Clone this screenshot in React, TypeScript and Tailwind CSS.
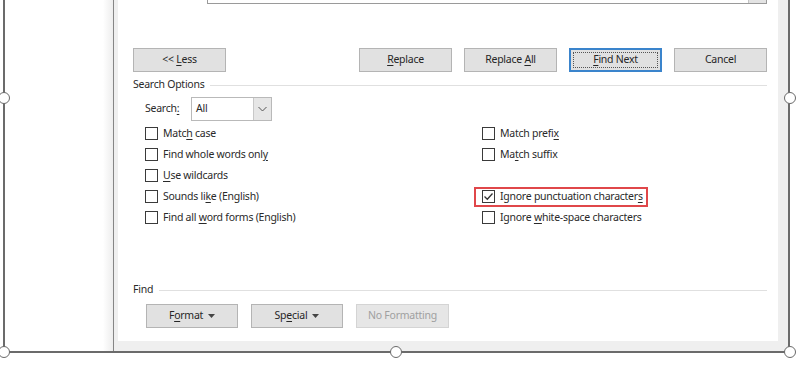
import { ReactNode } from "react";
import clsx from "clsx";

function U({ children }: { children: ReactNode }) {
  return <span className="underline underline-offset-2 decoration-1">{children}</span>;
}

function Caret() {
  return (
    <svg width="7" height="4" viewBox="0 0 7 4" className="ml-[5px]">
      <path d="M0 0h7L3.5 4z" fill="#444" />
    </svg>
  );
}

function Btn({
  children,
  w = "w-[93px]",
  focused,
  disabled,
  caret,
}: {
  children: ReactNode;
  w?: string;
  focused?: boolean;
  disabled?: boolean;
  caret?: boolean;
}) {
  return (
    <div
      className={clsx(
        "relative h-[24px] flex items-center justify-center",
        w,
        focused ? "border-2 border-[#3a84cc]" : "border",
        disabled
          ? "bg-[#e6e6e6] text-[#a0a0a0] border-[#d4d4d4]"
          : "bg-[#e1e1e1] text-[#262626]",
        !focused && !disabled && "border-[#b4b4b4]"
      )}
    >
      {focused && <span className="absolute inset-[2px] border border-dotted border-[#555]" />}
      <span>{children}</span>
      {caret && <Caret />}
    </div>
  );
}

function Check({ label, checked }: { label?: ReactNode; checked?: boolean }) {
  return (
    <div className="h-[21px] flex items-center gap-[5px]">
      {label !== undefined && (
        <>
          <span className="w-[13px] h-[13px] border border-[#3a3a3a] bg-white flex items-center justify-center">
            {checked && (
              <svg width="11" height="11" viewBox="0 0 11 11">
                <path d="M1.5 5.5l2.8 2.8L9.5 2.5" stroke="#333" strokeWidth="1.3" fill="none" />
              </svg>
            )}
          </span>
          <span>{label}</span>
        </>
      )}
    </div>
  );
}

function Handle({ pos }: { pos: string }) {
  return (
    <span
      className={clsx(
        "absolute w-[12px] h-[12px] rounded-full bg-white border-[1.5px] border-[#6a6a6a]",
        pos
      )}
    />
  );
}

export default function App() {
  return (
    <div className="relative w-[800px] h-[365px] bg-white overflow-hidden font-['Noto_Sans',sans-serif] text-[10.5px] tracking-[-0.25px] text-[#2a2a2a]">
      <div className="ml-[3px] w-[787px] h-[353px] border-x-2 border-b-2 border-[#6b6b6b] flex">
        <div className="w-[108px] flex justify-end">
          <div className="w-[10px] bg-gradient-to-r from-white to-[#ededed]" />
        </div>
        <div className="flex-1 border-l border-[#858585] bg-[#efefef] pl-[4px] pr-[10px] pb-[10px]">
          <div className="h-full bg-white flex flex-col">
            <div className="ml-[89px] w-[560px] h-[4px] border-x border-b border-[#9a9a9a] flex justify-end">
              <div className="w-[18px] bg-[#e3e3e3] border-l border-[#c4c4c4]" />
            </div>

            <div className="mt-[44px] ml-[15px] w-[634px] flex">
              <Btn>
                &lt;&lt; <U>L</U>ess
              </Btn>
              <div className="flex-1" />
              <div className="flex gap-[12px]">
                <Btn>
                  <U>R</U>eplace
                </Btn>
                <Btn>
                  Replace <U>A</U>ll
                </Btn>
                <Btn focused>
                  <U>F</U>ind Next
                </Btn>
                <Btn>Cancel</Btn>
              </div>
            </div>

            <div className="mt-[5px] ml-[15px] w-[634px] h-[16px] flex items-center">
              <span>Search Options</span>
              <div className="flex-1 h-px bg-[#e0e0e0] ml-[5px]" />
            </div>

            <div className="mt-[4px] ml-[27px] flex items-center">
              <span className="w-[46px]">
                Search<U>:</U>
              </span>
              <div className="w-[81px] h-[24px] border border-[#b9b9b9] flex">
                <span className="flex-1 pl-[4px] flex items-center">All</span>
                <span className="w-[18px] bg-[#e6e6e6] border-l border-[#c8c8c8] flex items-center justify-center">
                  <svg width="9" height="6" viewBox="0 0 9 6">
                    <path d="M0.5 1l4 4 4-4" stroke="#555" strokeWidth="1" fill="none" />
                  </svg>
                </span>
              </div>
            </div>

            <div className="mt-[2px] ml-[27px] flex">
              <div className="w-[337px] flex flex-col">
                <Check label={<>Matc<U>h</U> case</>} />
                <Check label={<>Find whole words onl<U>y</U></>} />
                <Check label={<><U>U</U>se wildcards</>} />
                <Check label={<>Sounds li<U>k</U>e (English)</>} />
                <Check label={<>Find all <U>w</U>ord forms (English)</>} />
              </div>
              <div className="flex flex-col">
                <Check label={<>Match prefi<U>x</U></>} />
                <Check label={<>Ma<U>t</U>ch suffix</>} />
                <Check />
                <div className="relative">
                  <Check checked label={<>Ignore punctuation character<U>s</U></>} />
                  <span className="absolute left-[-8px] top-[1px] w-[174px] h-[20px] border-2 border-[#e0474a]" />
                </div>
                <Check label={<>Ignore <U>w</U>hite-space characters</>} />
              </div>
            </div>

            <div className="mt-[54px] ml-[15px] w-[634px] h-[16px] flex items-center">
              <span>Find</span>
              <div className="flex-1 h-px bg-[#e0e0e0] ml-[6px]" />
            </div>

            <div className="mt-[6px] ml-[28px] flex gap-[13px]">
              <Btn w="w-[92px]" caret>
                F<U>o</U>rmat
              </Btn>
              <Btn w="w-[92px]" caret>
                Sp<U>e</U>cial
              </Btn>
              <Btn w="w-[93px]" disabled>
                No Formatting
              </Btn>
            </div>
          </div>
        </div>
      </div>

      <Handle pos="left-[-2px] top-[92px]" />
      <Handle pos="left-[784px] top-[92px]" />
      <Handle pos="left-[-2px] top-[346px]" />
      <Handle pos="left-[390px] top-[346px]" />
      <Handle pos="left-[784px] top-[346px]" />
    </div>
  );
}
